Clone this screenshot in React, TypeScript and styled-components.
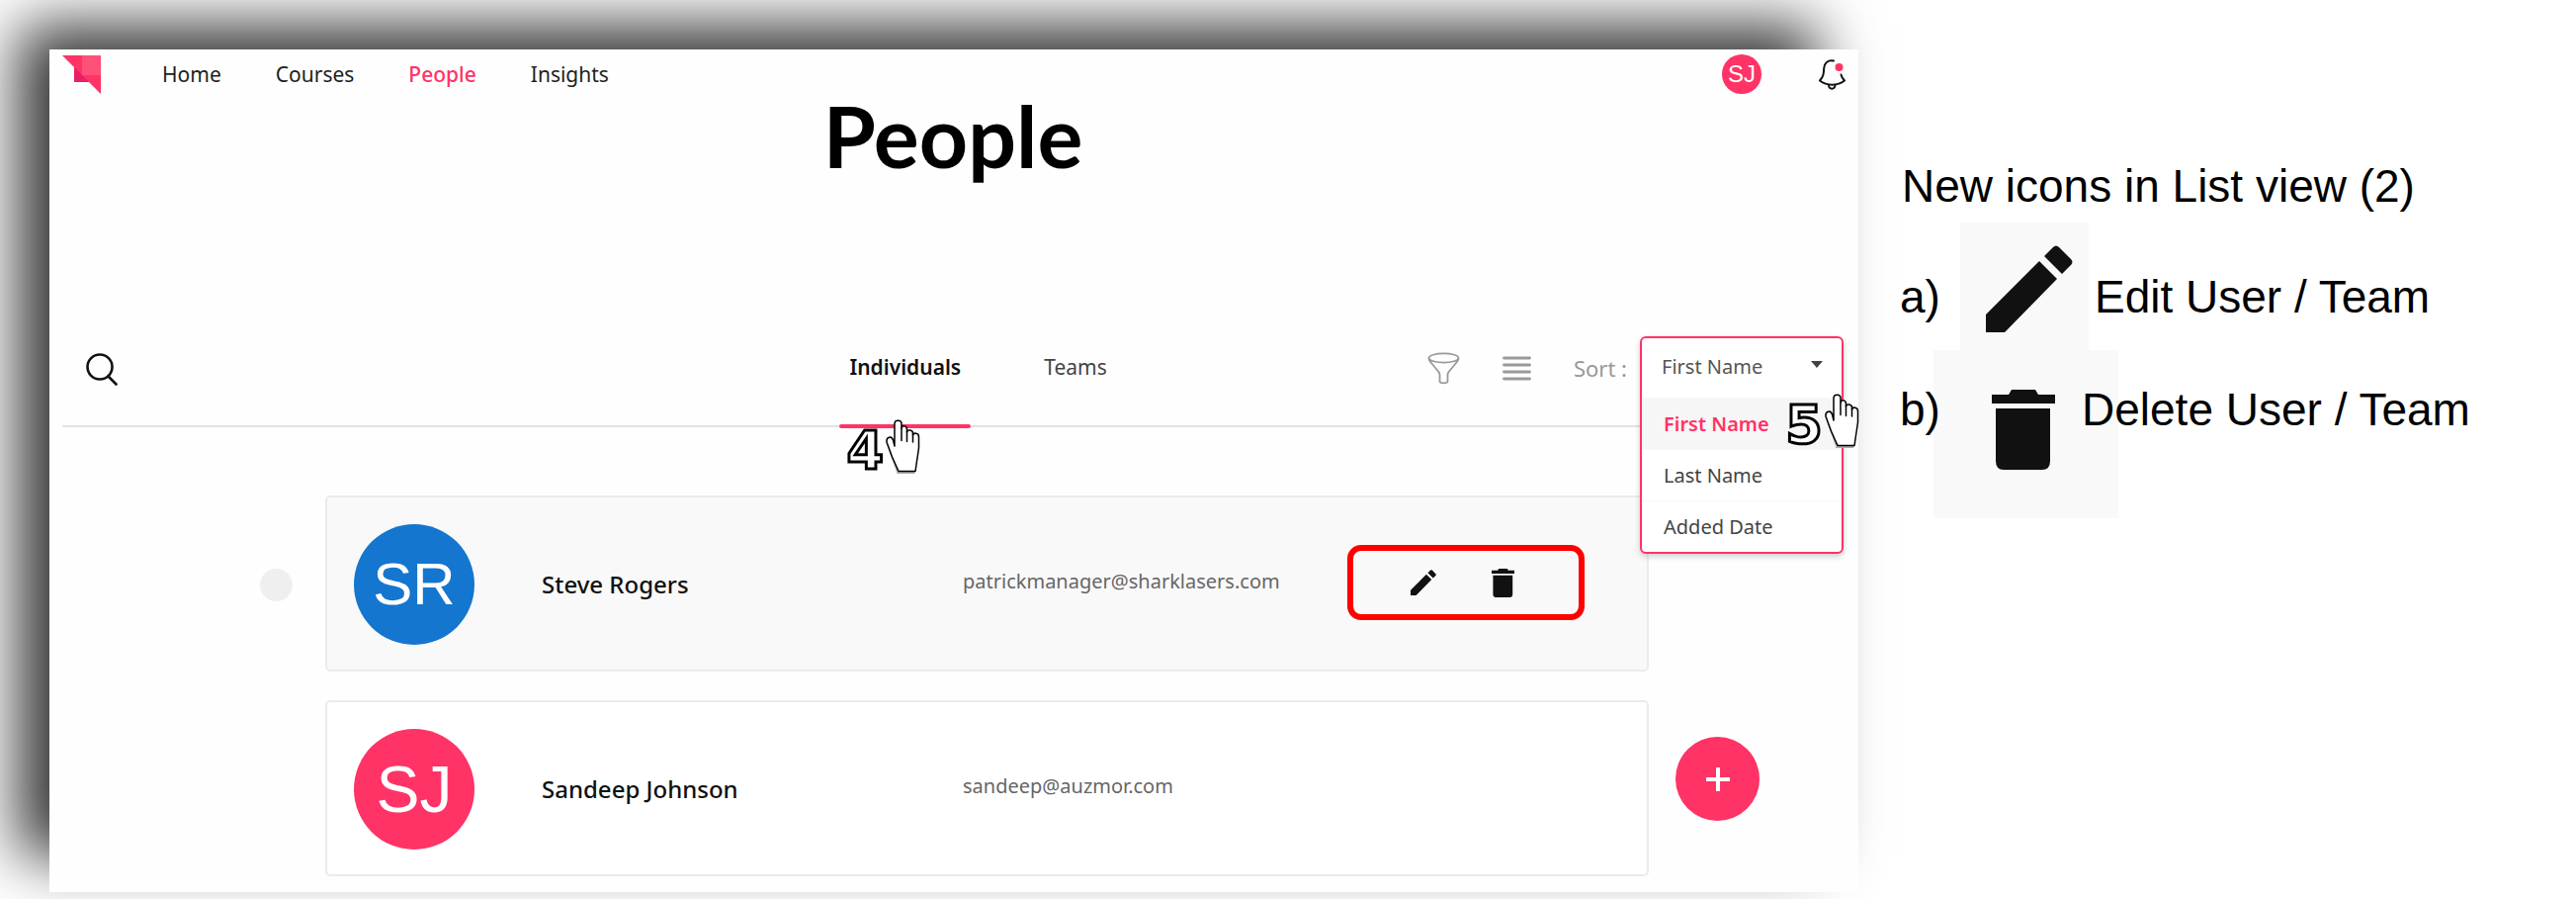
import React from 'react';
import styled, { createGlobalStyle } from 'styled-components';

const pink = '#ff3366';
const uiFont = '"Noto Sans", "Open Sans", sans-serif';
const noteFont = '"Liberation Sans", Arial, sans-serif';

const GlobalStyle = createGlobalStyle`
  *, *::before, *::after { box-sizing: border-box; }
  body { margin: 0; background: #fff; color: #111; font-family: ${uiFont}; overflow-x: hidden; }
  button { padding: 0; border: 0; background: none; color: inherit; font: inherit; cursor: pointer; }
  h1, h2, p, ul, ol { margin: 0; padding: 0; }
  ul, ol { list-style: none; }
  svg { display: block; }
`;

const Page = styled.div`
  display: flex;
  align-items: flex-start;
  padding: 50px 0 8px 50px;
`;

const Panel = styled.div`
  flex: 1;
  min-width: 1500px;
  padding: 0 15px 16px 13px;
  background: #fefefe;
  box-shadow: -37px -30px 58px -6px rgba(0, 0, 0, 0.8);
`;

const Header = styled.header`
  display: flex;
  align-items: center;
  height: 50px;
`;

const Nav = styled.nav`
  display: flex;
  gap: 55px;
  margin-left: 62px;
`;

const NavLink = styled.a<{ $active?: boolean }>`
  color: ${(p) => (p.$active ? pink : '#1d1f20')};
  font-size: 21px;
  font-weight: ${(p) => (p.$active ? 500 : 400)};
  line-height: 28px;
  text-decoration: none;
`;

const HeaderTools = styled.div`
  display: flex;
  align-items: center;
  gap: 58px;
  margin: 0 -2px 0 auto;
`;

const Avatar = styled.span<{ $size: number; $font: number; $color: string }>`
  display: flex;
  flex: none;
  align-items: center;
  justify-content: center;
  width: ${(p) => p.$size}px;
  height: ${(p) => p.$size}px;
  border-radius: 50%;
  background: ${(p) => p.$color};
  color: #fff;
  font-family: ${noteFont};
  font-size: ${(p) => p.$font}px;
  line-height: 1;
`;

const Title = styled.h1`
  color: #000;
  font-family: Lato, sans-serif;
  font-size: 86px;
  font-weight: 700;
  line-height: 74px;
  text-align: center;
`;

const Toolbar = styled.div`
  display: grid;
  grid-template-columns: 784fr auto 733fr;
  height: 92px;
  margin-top: 166px;
  border-bottom: 2px solid #e2e2e2;
`;

const SearchButton = styled.button`
  justify-self: start;
  align-self: start;
  margin: 16px 0 0 24px;
`;

const Tabs = styled.div`
  display: flex;
  gap: 64px;
`;

const Tab = styled.button<{ $active?: boolean }>`
  position: relative;
  padding: 0 10px 28px;
  color: ${(p) => (p.$active ? '#111' : '#444')};
  font-size: 21px;
  font-weight: ${(p) => (p.$active ? 600 : 400)};
  line-height: 28px;

  &::after {
    content: '';
    display: ${(p) => (p.$active ? 'block' : 'none')};
    position: absolute;
    right: 0;
    bottom: -3px;
    left: 0;
    height: 4px;
    border-radius: 2px;
    background: ${pink};
  }
`;

const TabSlot = styled.div`
  display: flex;
  position: relative;
`;

const ViewTools = styled.div`
  display: flex;
  justify-content: flex-end;
  color: #999;
`;

const IconButton = styled.button`
  align-self: flex-start;
  margin: 16px 43px 0 0;
`;

const SortLabel = styled.label`
  margin-right: 13px;
  font-size: 22px;
  line-height: 64px;
`;

const SortSlot = styled.div`
  position: relative;
  width: 206px;
`;

const SortMenu = styled.div`
  position: absolute;
  top: 0;
  right: 0;
  left: 0;
  border: 2px solid ${pink};
  border-radius: 6px;
  background: #fff;
  box-shadow: 0 3px 6px rgba(0, 0, 0, 0.18);
  color: #444;
  font-size: 20px;
`;

const SortField = styled.div`
  display: grid;
  align-items: center;
  height: 60px;

  & > * { grid-area: 1 / 1; }
`;

const SortSelect = styled.select`
  width: 100%;
  padding: 0 20px 4px;
  border: 0;
  outline: 0;
  appearance: none;
  background: none;
  color: #555;
  font: inherit;
`;

const Caret = styled.svg`
  justify-self: end;
  margin: 0 19px 8px 0;
  pointer-events: none;
`;

const Option = styled.li<{ $selected?: boolean }>`
  padding: 0 22px;
  border-top: 1px solid #f7f7f7;
  background: ${(p) => (p.$selected ? '#f6f6f6' : 'transparent')};
  color: ${(p) => (p.$selected ? pink : '#444')};
  font-weight: ${(p) => (p.$selected ? 600 : 400)};
  line-height: 51px;
`;

const Callout = styled.div<{ $left: number; $top: number }>`
  display: flex;
  align-items: flex-start;
  position: absolute;
  top: ${(p) => p.$top}px;
  left: ${(p) => p.$left}px;
  z-index: 2;
  pointer-events: none;
`;

const CalloutNumber = styled.span`
  width: 42px;
  margin-top: 8px;
  color: #fff;
  font-family: "DejaVu Sans", sans-serif;
  font-size: 54px;
  font-weight: 700;
  line-height: 48px;
  text-align: center;
  -webkit-text-stroke: 3px #000;
`;

const People = styled.ul`
  display: grid;
  grid-template-columns: 233px 1fr 85px;
  column-gap: 27px;
  row-gap: 29px;
  margin: 69px 85px 0 0;
  & > li { display: contents; }
`;

const PickBox = styled.input`
  justify-self: end;
  align-self: center;
  width: 33px;
  height: 33px;
  margin: 3px 0 0;
  border-radius: 50%;
  appearance: none;
  background: #efefef;
`;

const Card = styled.article<{ $raised?: boolean }>`
  display: grid;
  grid-column: 2;
  grid-template-columns: 190px 426px 389px 1fr;
  align-items: center;
  height: 178px;
  margin-left: 6px;
  padding: 2px 0 0 27px;
  border: 2px solid #ebebeb;
  border-radius: 5px;
  background: ${(p) => (p.$raised ? '#f9f9f9' : '#fff')};
`;

const Name = styled.h2`
  margin: 0;
  color: #111;
  font-size: 24px;
  font-weight: 500;
  line-height: 32px;
`;

const Email = styled.p`
  padding-bottom: 6px;
  color: #666;
  font-size: 20px;
  line-height: 26px;
`;

const Actions = styled.div`
  display: flex;
  align-items: center;
  justify-content: center;
  gap: 56px;
  width: 240px;
  height: 76px;
  margin-bottom: 4px;
  padding-right: 8px;
  border: 6px solid #f00;
  border-radius: 14px;
`;

const AddButton = styled.button`
  display: flex;
  grid-column: 3;
  align-items: center;
  justify-content: center;
  align-self: start;
  width: 85px;
  height: 85px;
  margin-top: 37px;
  border-radius: 50%;
  background: ${pink};
`;

const Notes = styled.aside`
  width: 726px;
  padding: 112px 0 0 42px;
  color: #000;
  font-family: ${noteFont};
  font-size: 46px;
  line-height: 52px;
`;

const NotesTitle = styled.p`
  padding-left: 2px;
`;

const NoteRow = styled.li<{ $offset: number }>`
  display: flex;
  align-items: flex-start;
  white-space: nowrap;

  & > span { position: relative; padding-top: ${(p) => p.$offset}px; }
`;

const NoteLetter = styled.span`
  z-index: 1;
  width: 40px;
`;

const NoteTile = styled.div<{ $wide?: boolean }>`
  display: flex;
  flex: none;
  align-items: flex-start;
  width: ${(p) => (p.$wide ? 187 : 130)}px;
  height: ${(p) => (p.$wide ? 170 : 129)}px;
  margin: ${(p) => (p.$wide ? '0 -37px 0 -6px' : '0 6px 0 21px')};
  padding: ${(p) => (p.$wide ? '40px 0 0 59px' : '23px 0 0 26px')};
  background: #f9f9f9;
`;

const NoteList = styled.ol`
  margin-top: 11px;
`;

function Logo() {
  return (
    <svg width="39" height="39" viewBox="0 0 39 39" aria-hidden="true">
      <path d="M0 0H39V39L27 27H12V12Z" fill="#ff3366" />
      <path d="M20 0H39V20H20Z" fill="#ff5078" />
      <path d="M12 12L27 27H12Z" fill="#e91e63" />
    </svg>
  );
}

function Bell() {
  return (
    <svg width="27" height="31" viewBox="0 0 27 31" fill="none" stroke="#111" strokeWidth="2" strokeLinecap="round" aria-hidden="true">
      <path d="M15 1.6C9 .4 5.400 4 5.200 9C5 15 4.500 17.500 1 21.500C8 27 19 27 26 21.500C24 19.500 23 17.500 22.500 15.500" />
      <path d="M10 26.500C10.500 30.800 16 30.800 16.500 26.500" />
      <circle cx="20.500" cy="8" r="4" fill={pink} stroke="none" />
    </svg>
  );
}

function SearchIcon() {
  return (
    <svg width="32" height="34" viewBox="0 0 32 34" fill="none" stroke="#111" strokeWidth="2.600" strokeLinecap="round" aria-hidden="true">
      <circle cx="14" cy="15" r="12.500" />
      <path d="M22.500 24.500L30.500 32.500" />
    </svg>
  );
}

function FilterIcon() {
  return (
    <svg width="33" height="33" viewBox="0 0 33 33" fill="none" stroke="#999" strokeWidth="1.800" aria-hidden="true">
      <ellipse cx="16.500" cy="6" rx="15" ry="4.600" />
      <path d="M1.500 6C1.500 8 2.500 9.500 4 11L11 19.500Q12.500 21 12.500 23V29.500C12.500 32 20.500 32 20.500 29.500V23Q20.500 21 22 19.500L29 11C30.500 9.500 31.500 8 31.500 6" />
    </svg>
  );
}

function ListIcon() {
  return (
    <svg width="29" height="33" viewBox="0 0 29 33" stroke="#999" strokeWidth="2.800" strokeLinecap="round" aria-hidden="true">
      <path d="M1.500 6H27.500M1.500 13H27.500M1.500 20H27.500M1.500 27H27.500" />
    </svg>
  );
}

function Pencil({ size }: { size: number }) {
  return (
    <svg width={size} height={size} viewBox="0 0 88 88" fill="#111" aria-hidden="true">
      <path d="M0 70L54 16L72 34L19 88H0Z" />
      <path d="M59 11L68 2Q71 -1 74 2L86 14Q89 17 86 20L77 29Z" />
    </svg>
  );
}

function Trash({ width, height }: { width: number; height: number }) {
  return (
    <svg width={width} height={height} viewBox="0 0 64 81" preserveAspectRatio="none" fill="#111" aria-hidden="true">
      <path d="M0 5H17L20 0H44L47 5H64V14H0Z" />
      <path d="M4 19H59V72Q59 81 51 81H12Q4 81 4 72Z" />
    </svg>
  );
}

function Hand() {
  return (
    <svg width="36" height="56" viewBox="0 0 36 56" aria-hidden="true">
      <path d="M11 55H29L31 51H12Z M1 25L11 53L13 51L4 27Z" fill="#aaa" />
      <path
        d="M9 27V4.500C9 .2 16 .2 16 4.500V9C16 6 21.500 6 21.500 10V13C22 9.800 27.500 10.500 27.500 14V16C28 13.200 33.500 13.500 33.500 17.500V29L30 52.500H13L6.500 38L1 23C.5 17.500 6 16.500 7.500 21Z"
        fill="#fff"
        stroke="#000"
        strokeWidth="1.500"
        strokeLinejoin="round"
      />
      <path d="M16 9V21.500M21.500 12V22.500M27.500 15V23" stroke="#000" strokeWidth="1.500" strokeLinecap="round" />
    </svg>
  );
}

const options = ['First Name', 'Last Name', 'Added Date'];

export default function App() {
  return (
    <>
      <GlobalStyle />
      <Page>
        <Panel>
          <Header>
            <Logo />
            <Nav>
              <NavLink href="#home">Home</NavLink>
              <NavLink href="#courses">Courses</NavLink>
              <NavLink href="#people" $active aria-current="page">People</NavLink>
              <NavLink href="#insights">Insights</NavLink>
            </Nav>
            <HeaderTools>
              <Avatar $size={40} $font={24} $color={pink}>SJ</Avatar>
              <button type="button" aria-label="Notifications"><Bell /></button>
            </HeaderTools>
          </Header>
          <main>
            <Title>People</Title>
            <Toolbar>
              <SearchButton type="button" aria-label="Search"><SearchIcon /></SearchButton>
              <Tabs role="tablist">
                <TabSlot>
                  <Tab type="button" role="tab" aria-selected="true" $active>Individuals</Tab>
                  <Callout $left={5} $top={84}>
                    <CalloutNumber>4</CalloutNumber>
                    <Hand />
                  </Callout>
                </TabSlot>
                <Tab type="button" role="tab" aria-selected="false">Teams</Tab>
              </Tabs>
              <ViewTools>
                <IconButton type="button" aria-label="Filter"><FilterIcon /></IconButton>
                <IconButton type="button" aria-label="List view"><ListIcon /></IconButton>
                <SortLabel htmlFor="sort">Sort :</SortLabel>
                <SortSlot>
                  <SortMenu>
                    <SortField>
                      <SortSelect id="sort" defaultValue="First Name">
                        {options.map((o) => <option key={o}>{o}</option>)}
                      </SortSelect>
                      <Caret width="12" height="7" viewBox="0 0 12 7"><path d="M0 0H12L6 7Z" fill="#444" /></Caret>
                    </SortField>
                    <ul role="listbox" aria-label="Sort by">
                      {options.map((o, i) => (
                        <Option key={o} role="option" aria-selected={i === 0} $selected={i === 0}>{o}</Option>
                      ))}
                    </ul>
                  </SortMenu>
                  <Callout $left={145} $top={58}>
                    <CalloutNumber>5</CalloutNumber>
                    <Hand />
                  </Callout>
                </SortSlot>
              </ViewTools>
            </Toolbar>
            <People>
              <li>
                <PickBox type="checkbox" aria-label="Select Steve Rogers" />
                <Card $raised>
                  <Avatar $size={122} $font={60} $color="#1476cf">SR</Avatar>
                  <Name>Steve Rogers</Name>
                  <Email>patrickmanager@sharklasers.com</Email>
                  <Actions>
                    <button type="button" aria-label="Edit user"><Pencil size={26} /></button>
                    <button type="button" aria-label="Delete user"><Trash width={23} height={29} /></button>
                  </Actions>
                </Card>
              </li>
              <li>
                <Card>
                  <Avatar $size={122} $font={66} $color={pink}>SJ</Avatar>
                  <Name>Sandeep Johnson</Name>
                  <Email>sandeep@auzmor.com</Email>
                </Card>
                <AddButton type="button" aria-label="Add person">
                  <svg width="24" height="24" viewBox="0 0 24 24" stroke="#fff" strokeWidth="4" aria-hidden="true">
                    <path d="M12 0V24M0 12H24" />
                  </svg>
                </AddButton>
              </li>
            </People>
          </main>
        </Panel>
        <Notes>
          <NotesTitle>New icons in List view (2)</NotesTitle>
          <NoteList>
            <NoteRow $offset={49}>
              <NoteLetter>a)</NoteLetter>
              <NoteTile><Pencil size={88} /></NoteTile>
              <span>Edit User / Team</span>
            </NoteRow>
            <NoteRow $offset={34}>
              <NoteLetter>b)</NoteLetter>
              <NoteTile $wide><Trash width={64} height={81} /></NoteTile>
              <span>Delete User / Team</span>
            </NoteRow>
          </NoteList>
        </Notes>
      </Page>
    </>
  );
}
